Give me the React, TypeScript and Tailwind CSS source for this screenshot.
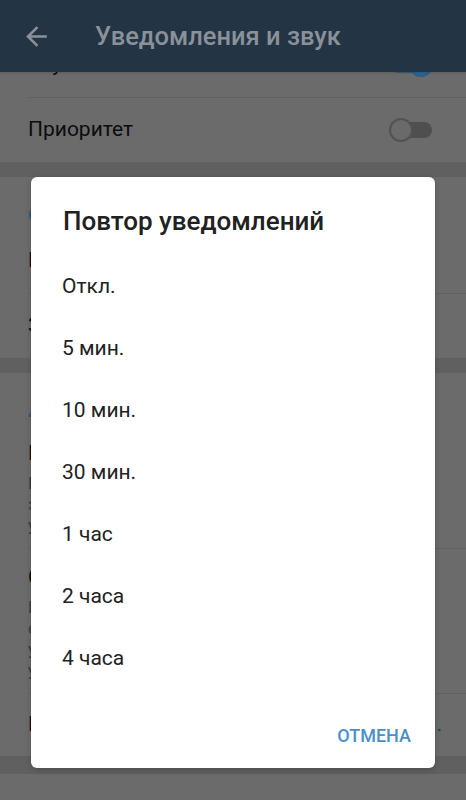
import React from "react";

const font = { fontFamily: "Roboto, 'Noto Sans', sans-serif" };

function ToggleOn() {
  return (
    <div className="relative w-[50px] h-[24px] shrink-0">
      <div className="absolute left-[7px] top-[4px] w-[36px] h-[16px] rounded-full bg-[#3b5f7c]" />
      <div className="absolute right-[0px] top-[0px] w-[24px] h-[24px] rounded-full bg-[#2c6797] border-2 border-[#2a5f8a]" />
    </div>
  );
}

function ToggleOff() {
  return (
    <div className="relative w-[44px] h-[24px] shrink-0">
      <div className="absolute left-[7px] top-[4px] w-[36px] h-[16px] rounded-full bg-[#4f4f4f]" />
      <div className="absolute left-0 top-0 w-[24px] h-[24px] rounded-full bg-[#6a6a6a] border-2 border-[#525252]" />
    </div>
  );
}

function Divider() {
  return <div className="h-px bg-[#616161] ml-[28px]" />;
}

function Band({ h }: { h: string }) {
  return <div className={`${h} bg-[#606060]`} />;
}

function CheckRow({ title, on }: { title: string; on: boolean }) {
  return (
    <div className="h-[64px] flex items-center justify-between pl-[28px] pr-[33px]">
      <span className="text-[21px] text-[#0c0c0c]">{title}</span>
      {on ? <ToggleOn /> : <ToggleOff />}
    </div>
  );
}

function Header({ title }: { title: string }) {
  return (
    <div className="h-[52px] pt-[28px] pl-[28px]">
      <div className="text-[19px] leading-[20px] font-medium text-[#2a5a80]">{title}</div>
    </div>
  );
}

function DetailRow({ title, lines }: { title: string; lines: string[] }) {
  return (
    <div className="flex items-center justify-between pl-[28px] pr-[33px] pt-[15px] pb-[12px]">
      <div>
        <div className="text-[21px] leading-[26px] text-[#0c0c0c]">{title}</div>
        <div className="mt-[7px] text-[17px] leading-[21px] text-[#3a3a3a]">
          {lines.map((l) => (
            <div key={l}>{l}</div>
          ))}
        </div>
      </div>
      <ToggleOn />
    </div>
  );
}

const options = ["Откл.", "5 мин.", "10 мин.", "30 мин.", "1 час", "2 часа", "4 часа"];

export default function App() {
  return (
    <div className="relative w-[466px] h-[800px] overflow-hidden bg-[#6b6b6b]" style={font}>
      <div className="relative z-10 h-[72px] bg-[#233545] flex items-center shadow-[0_1px_2px_rgba(0,0,0,0.15)]">
        <svg width="31" height="31" viewBox="0 0 24 24" className="ml-[21px] mt-[1px]" fill="#8a9199">
          <path d="M20 11H7.83l5.59-5.59L12 4l-8 8 8 8 1.41-1.41L7.83 13H20v-2z" />
        </svg>
        <span className="ml-[43px] text-[25.5px] font-medium text-[#8a9199]">Уведомления и звук</span>
      </div>

      <div className="mt-[-39px]">
        <CheckRow title="Звук в чате" on={true} />
        <Divider />
        <CheckRow title="Приоритет" on={false} />
        <Band h="h-[15px]" />

        <Header title="События" />
        <div className="h-[64px] flex items-center pl-[28px]">
          <span className="text-[21px] text-[#0c0c0c]">Контакт присоединился к Telegram</span>
        </div>
        <Divider />
        <CheckRow title="Закреплённые сообщения" on={true} />
        <Band h="h-[15px]" />

        <Header title="Автозапуск" />
        <DetailRow
          title="Перезапуск приложения"
          lines={["Перезапускать после закрытия", "здесь для надёжной доставки", "уведомлений"]}
        />
        <Divider />
        <DetailRow
          title="Сервис уведомлений"
          lines={["Поддерживать фоновое", "соединение с Telegram для", "устойчивой работы", "уведомлений"]}
        />
        <Divider />
        <div className="h-[62px] flex items-center justify-between pl-[28px] pr-[24px]">
          <span className="text-[21px] text-[#0c0c0c]">Повтор уведомлений</span>
          <span className="text-[21px] text-[#1f3f5c]">Откл.</span>
        </div>
        <Band h="h-[18px]" />
        <div className="h-[40px]" />
      </div>

      <div className="absolute left-[31px] top-[177px] w-[404px] h-[591px] z-20 bg-white rounded-[6px] shadow-[0_2px_6px_rgba(0,0,0,0.2)] flex flex-col">
        <div className="pt-[29px] pl-[32px] mb-[20px]">
          <div className="text-[26px] leading-[30px] font-medium text-[#212121]">Повтор уведомлений</div>
        </div>
        <div className="flex flex-col">
          {options.map((o) => (
            <div key={o} className="h-[62px] flex items-center pl-[31px] text-[21px] text-[#222222]">
              {o}
            </div>
          ))}
        </div>
        <div className="flex justify-end pt-[22px] pr-[16px]">
          <div className="h-[46px] px-[8px] flex items-center text-[18px] font-medium text-[#4a8fc9]">ОТМЕНА</div>
        </div>
      </div>
    </div>
  );
}
